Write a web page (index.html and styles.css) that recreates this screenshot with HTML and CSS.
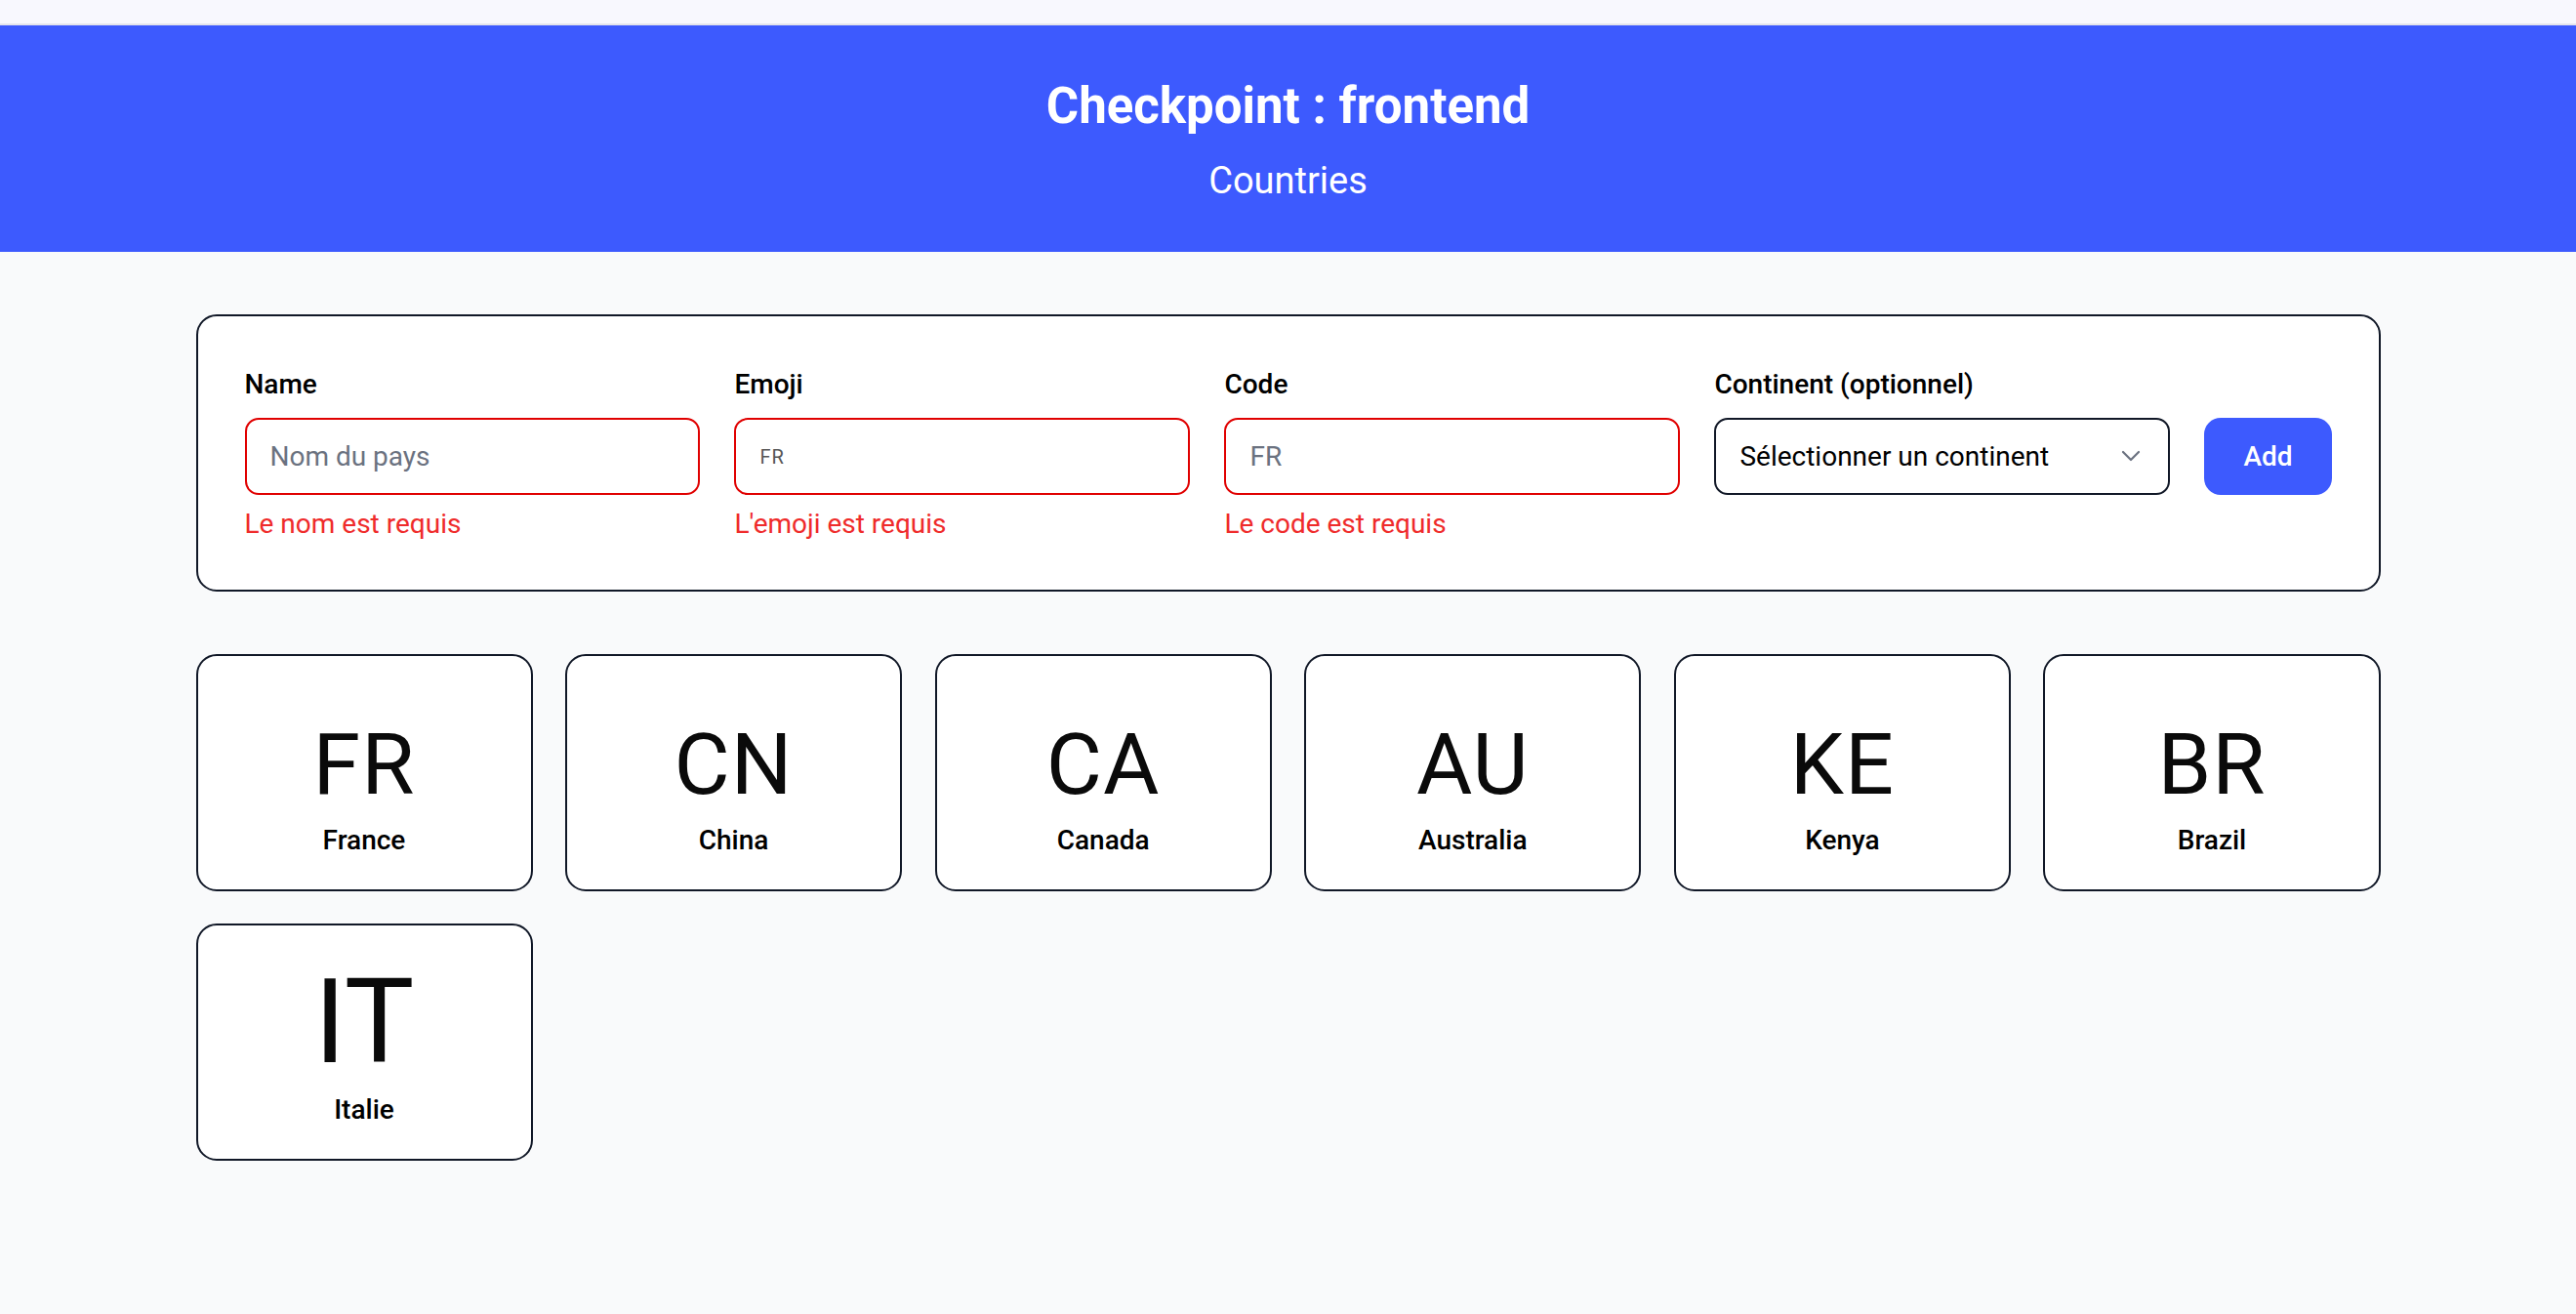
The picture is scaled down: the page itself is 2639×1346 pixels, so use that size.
FILE: index.html
```html
<!DOCTYPE html>
<html lang="fr">
<head>
<meta charset="utf-8">
<title>Checkpoint : frontend</title>
<link rel="stylesheet" href="styles.css">
</head>
<body>
<div class="topbar"></div>
<header class="hero">
  <h1 class="hero-title">Checkpoint : frontend</h1>
  <p class="hero-sub">Countries</p>
</header>
<main class="container">
  <form class="add-form">
    <div class="field">
      <label class="field-label">Name</label>
      <input class="field-input invalid" type="text" placeholder="Nom du pays">
      <p class="field-error">Le nom est requis</p>
    </div>
    <div class="field">
      <label class="field-label">Emoji</label>
      <input class="field-input invalid emoji-input" type="text" placeholder="FR">
      <p class="field-error">L'emoji est requis</p>
    </div>
    <div class="field">
      <label class="field-label">Code</label>
      <input class="field-input invalid" type="text" placeholder="FR">
      <p class="field-error">Le code est requis</p>
    </div>
    <div class="field">
      <label class="field-label">Continent (optionnel)</label>
      <div class="select-wrap">
        <select class="field-select">
          <option>Sélectionner un continent</option>
        </select>
        <svg class="select-chevron" width="20" height="12" viewBox="0 0 20 12" fill="none"><path d="M2 2 L10 10 L18 2" stroke="#6b7280" stroke-width="2.2" stroke-linecap="round" stroke-linejoin="round"/></svg>
      </div>
    </div>
    <button class="add-btn" type="button">Add</button>
  </form>

  <section class="country-grid">
    <div class="country-card"><div class="country-code">FR</div><div class="country-name">France</div></div>
    <div class="country-card"><div class="country-code">CN</div><div class="country-name">China</div></div>
    <div class="country-card"><div class="country-code">CA</div><div class="country-name">Canada</div></div>
    <div class="country-card"><div class="country-code">AU</div><div class="country-name">Australia</div></div>
    <div class="country-card"><div class="country-code">KE</div><div class="country-name">Kenya</div></div>
    <div class="country-card"><div class="country-code">BR</div><div class="country-name">Brazil</div></div>
    <div class="country-card"><div class="country-code big">IT</div><div class="country-name">Italie</div></div>
  </section>
</main>
</body>
</html>
```

FILE: styles.css
```css
* { box-sizing: border-box; }

html, body {
  margin: 0;
  padding: 0;
}

body {
  background: #f9fafb;
  font-family: "Segoe UI", Roboto, "Noto Sans", sans-serif;
  color: #111;
  min-height: 1346px;
}

.topbar {
  height: 26px;
  background: #f8f8fe;
  border-bottom: 2px solid #e4e4ec;
}

.hero {
  background: #3d5afe;
  color: #fff;
  text-align: center;
  padding: 48px 0;
}

.hero-title {
  margin: 0 0 16px;
  font-size: 51px;
  line-height: 70px;
  font-weight: 700;
}

.hero-sub {
  margin: 0;
  font-size: 38px;
  line-height: 50px;
  font-weight: 400;
}

.container {
  width: 2238px;
  margin: 64px auto 0;
}

.add-form {
  display: flex;
  align-items: flex-start;
  gap: 35px;
  background: #fff;
  border: 2px solid #111827;
  border-radius: 21px;
  padding: 49px 48px 46px;
}

.field {
  flex: 1;
  display: flex;
  flex-direction: column;
  min-width: 0;
}

.field-label {
  font-size: 28px;
  line-height: 42px;
  font-weight: 500;
  color: #000;
  margin-bottom: 13px;
}

.field-input,
.field-select {
  height: 79px;
  width: 100%;
  border: 2px solid #111827;
  border-radius: 14px;
  padding: 0 24px;
  font-family: inherit;
  font-size: 28px;
  color: #111;
  background: #fff;
  outline: none;
}

.field-input::placeholder {
  color: #6b7280;
}

.field-input.invalid {
  border-color: #e00000;
}

.emoji-input {
  font-size: 20px;
}

.emoji-input::placeholder {
  color: #555;
  letter-spacing: 1px;
}

.field-error {
  margin: 9px 0 0;
  font-size: 28px;
  line-height: 42px;
  color: #ef2b2b;
}

.select-wrap {
  position: relative;
}

.field-select {
  appearance: none;
  -webkit-appearance: none;
  color: #000;
}

.select-chevron {
  position: absolute;
  right: 30px;
  top: 33px;
  pointer-events: none;
}

.add-btn {
  margin-top: 55px;
  height: 79px;
  padding: 0 40px;
  border: none;
  border-radius: 17px;
  background: #3d5afe;
  color: #fff;
  font-family: inherit;
  font-size: 28px;
  font-weight: 500;
}

.country-grid {
  display: grid;
  grid-template-columns: repeat(6, 1fr);
  column-gap: 33.6px;
  row-gap: 33px;
  margin-top: 64px;
}

.country-card {
  background: #fff;
  border: 2px solid #111827;
  border-radius: 21px;
  padding: 58px 16px 29px;
  display: flex;
  flex-direction: column;
  align-items: center;
  height: 243px;
}

.country-code {
  height: 105px;
  font-size: 88px;
  line-height: 105px;
  color: #0a0a0a;
  letter-spacing: 1px;
  margin-bottom: 5px;
}

.country-code.big {
  font-size: 120px;
  line-height: 83px;
  letter-spacing: 0;
}

.country-name {
  font-size: 28px;
  line-height: 42px;
  font-weight: 500;
  color: #000;
}
```
